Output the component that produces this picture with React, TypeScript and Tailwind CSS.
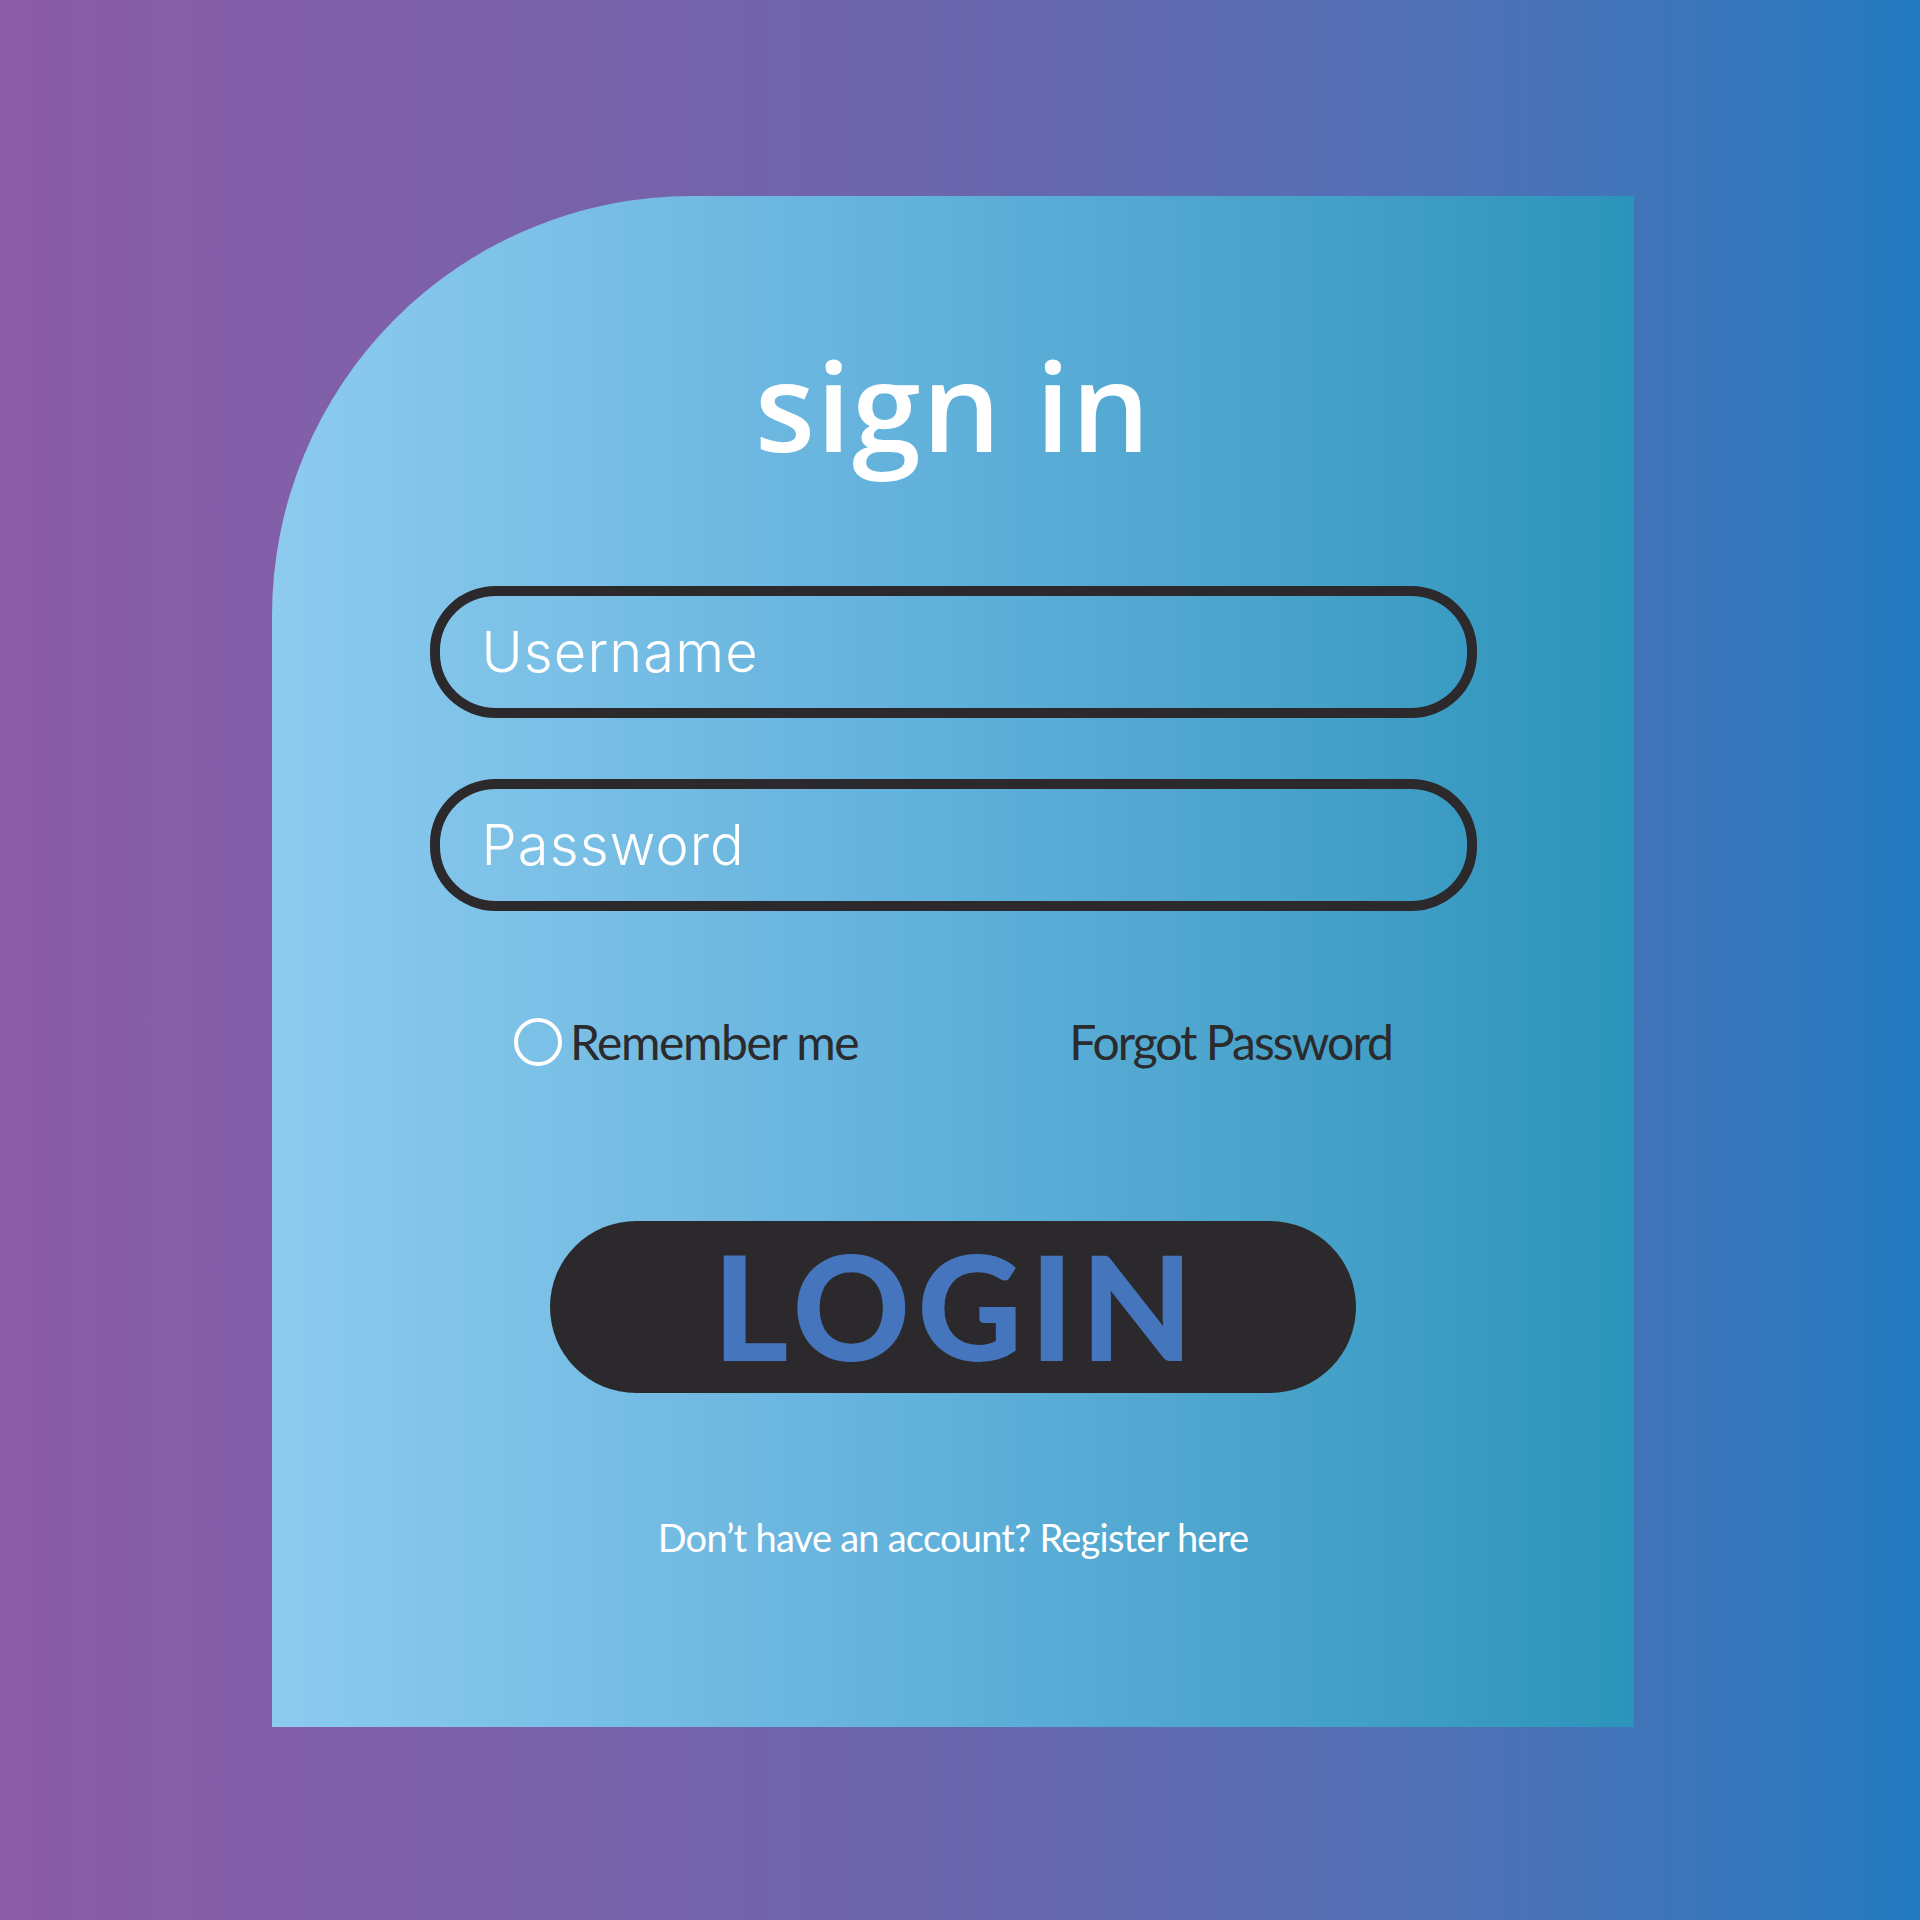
import { useState } from 'react';

export default function App() {
  const [remember, setRemember] = useState(false);

  return (
    <div className="w-full h-[1920px] bg-gradient-to-r from-[#8b5ba7] via-[#6a66ad] to-[#1f7abf] pt-[196px] pl-[272px]">
      <div className="w-[1362px] h-[1531px] rounded-tl-[420px] bg-gradient-to-r from-[#8dcbef] via-[#5fb0da] to-[#2b94ba] flex flex-col items-center">
        <h1
          className="mt-[146px] text-[124px] leading-none font-semibold text-white tracking-[0.01em]"
          style={{ fontFamily: '"Open Sans", sans-serif' }}
        >
          sign in
        </h1>

        <form className="mt-[120px] flex flex-col items-center" onSubmit={(e) => e.preventDefault()}>
          <div className="flex flex-col gap-[61px]">
            <input
              type="text"
              placeholder="Username"
              className="w-[1047px] h-[132px] rounded-[66px/64px] border-[10px] border-[#2b292b] bg-transparent pl-[42px] text-[56px] font-light text-white placeholder:text-white outline-none tracking-[0.02em]"
              style={{ fontFamily: 'Inter, sans-serif' }}
            />
            <input
              type="password"
              placeholder="Password"
              className="w-[1047px] h-[132px] rounded-[66px/64px] border-[10px] border-[#2b292b] bg-transparent pl-[42px] text-[56px] font-light text-white placeholder:text-white outline-none tracking-[0.02em]"
              style={{ fontFamily: 'Inter, sans-serif' }}
            />
          </div>

          <div
            className="mt-[95px] w-[878px] flex items-center justify-between text-[48px] tracking-[-0.03em] text-[#2b2a2c]"
            style={{ fontFamily: 'Lato, sans-serif' }}
          >
            <label className="flex items-center gap-[8px] cursor-pointer">
              <button
                type="button"
                onClick={() => setRemember(!remember)}
                className="w-[48px] h-[48px] rounded-full border-[4px] border-white flex items-center justify-center"
              >
                {remember && <span className="w-[24px] h-[24px] rounded-full bg-white" />}
              </button>
              <span>Remember me</span>
            </label>
            <a href="#" className="tracking-[-0.04em]">Forgot Password</a>
          </div>

          <button
            type="submit"
            className="mt-[143px] w-[806px] h-[172px] rounded-full bg-[#2b292b] text-[#4576bd] text-[145px] font-black leading-none tracking-[0.05em] pb-[4px] pl-[7px] flex items-center justify-center"
            style={{ fontFamily: 'Lato, sans-serif' }}
          >
            LOGIN
          </button>
        </form>

        <p
          className="mt-[116px] text-[38px] tracking-[-0.02em] text-white"
          style={{ fontFamily: 'Lato, sans-serif' }}
        >
          Don’t have an account? <a href="#">Register here</a>
        </p>
      </div>
    </div>
  );
}
